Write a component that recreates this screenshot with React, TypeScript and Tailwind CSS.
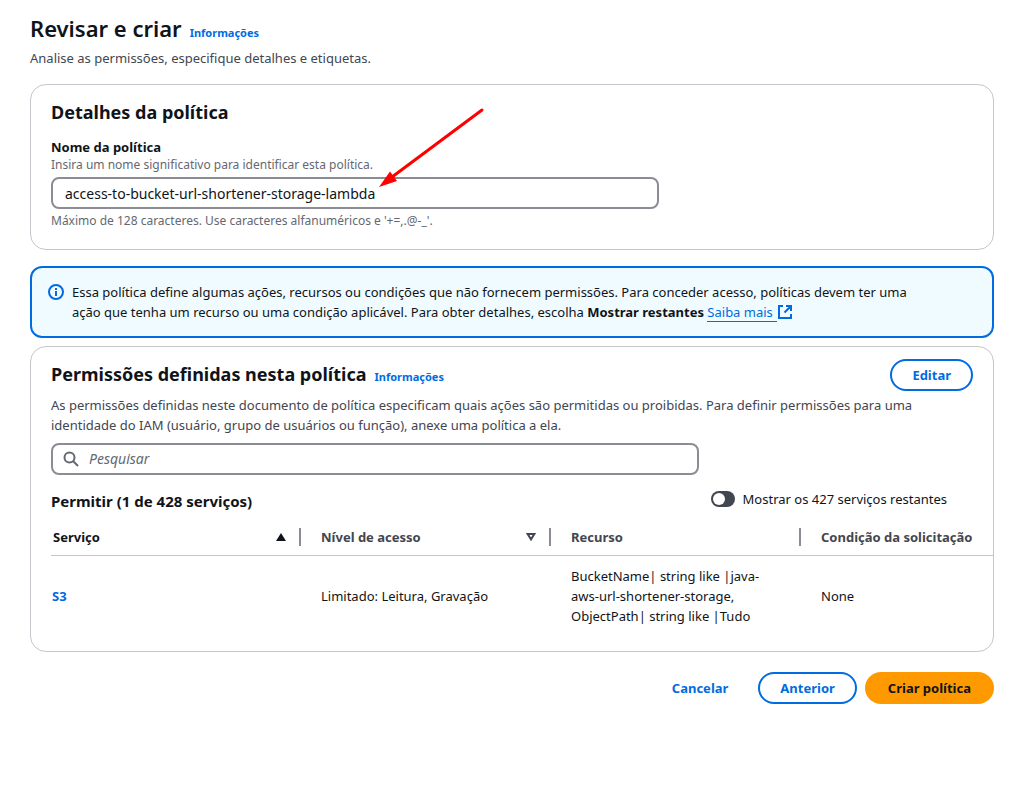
import { useState } from "react";

const serviceRows = [
  {
    service: "S3",
    access: "Limitado: Leitura, Gravação",
    resource: ["BucketName| string like |java-", "aws-url-shortener-storage,", "ObjectPath| string like |Tudo"],
    condition: "None",
  },
];

function InfoLink() {
  return (
    <a href="#info" className="text-[11px] font-bold text-[#006ce0]">
      Informações
    </a>
  );
}

function InfoIcon() {
  return (
    <svg viewBox="0 0 16 16" className="mt-0.5 size-4 shrink-0" fill="none" stroke="#006ce0" strokeWidth="2" aria-hidden="true">
      <circle cx="8" cy="8" r="7" />
      <path d="M8 12V7M8 6V4" />
    </svg>
  );
}

function ExternalIcon() {
  return (
    <svg viewBox="0 0 16 16" className="inline-block size-4 align-[-3px]" fill="none" stroke="#006ce0" strokeWidth="2" aria-hidden="true">
      <path d="M9 2h5v5M7.500 8.500 13.500 2.500M14 10v4H2V2h4" />
    </svg>
  );
}

function SearchIcon() {
  return (
    <svg viewBox="0 0 16 16" className="size-4 shrink-0" fill="none" stroke="#656871" strokeWidth="2" aria-hidden="true">
      <circle cx="6.500" cy="6.500" r="5" />
      <path d="m15 15-5-5" />
    </svg>
  );
}

function Arrow() {
  return (
    <svg viewBox="0 0 108 82" className="pointer-events-none absolute top-[22px] left-[347px] h-[82px] w-[108px]" aria-hidden="true">
      <path d="M104 3 14 70" stroke="#ff0000" strokeWidth="3" strokeLinecap="round" />
      <path d="M1 80 12 64.500 19 74Z" fill="#ff0000" />
    </svg>
  );
}

const heading = "text-lg leading-6 font-bold";
const field = "h-8 w-full rounded-lg border-2 border-[#8c8c94] bg-white text-sm";
const card = "rounded-2xl border border-[#c6c6cd] bg-white";
const outlineButton = "h-8 rounded-full border-2 border-[#006ce0] px-5 font-bold text-[#006ce0]";
const divider = "h-[18px] w-0.5 bg-[#8c8c94]";

export default function App() {
  const [name, setName] = useState("access-to-bucket-url-shortener-storage-lambda");
  const [showRest, setShowRest] = useState(false);

  return (
    <main className="pt-3 pr-4 pb-8 pl-[30px] font-['Noto_Sans',sans-serif] text-[13px] leading-5 text-[#0f141a]">
      <header>
        <div className="flex items-baseline gap-2">
          <h1 className="text-[22px] leading-8 font-semibold">Revisar e criar</h1>
          <InfoLink />
        </div>
        <p className="mt-1 text-[#424650]">Analise as permissões, especifique detalhes e etiquetas.</p>
      </header>

      <section className={`${card} relative mt-4 px-5 pt-[15px] pb-5`}>
        <h2 className={heading}>Detalhes da política</h2>
        <label htmlFor="policy-name" className="mt-[13px] block font-bold">
          Nome da política
        </label>
        <p className="text-xs leading-4 text-[#656871]">Insira um nome significativo para identificar esta política.</p>
        <input
          id="policy-name"
          value={name}
          onChange={(e) => setName(e.target.value)}
          className={`${field} mt-1 block max-w-[608px] px-3`}
        />
        <p className="mt-1 text-xs leading-4 text-[#656871]">
          Máximo de 128 caracteres. Use caracteres alfanuméricos e '+=,.@-_'.
        </p>
        <Arrow />
      </section>

      <div className="mt-4 flex gap-2 rounded-xl border-2 border-[#006ce0] bg-[#f0fbff] px-4 py-3.5">
        <InfoIcon />
        <p className="pr-14">
          Essa política define algumas ações, recursos ou condições que não fornecem permissões. Para conceder acesso, políticas devem ter uma ação que tenha um recurso ou uma condição aplicável. Para obter detalhes, escolha <b>Mostrar restantes</b>{" "}
          <a href="#more" className="text-[#006ce0]">
            <span className="border-b border-[#006ce0] pr-1">Saiba mais</span>
            <ExternalIcon />
          </a>
        </p>
      </div>

      <section className={`${card} mt-2 pt-3 pb-[15px] pl-5`}>
        <div className="flex items-start justify-between pr-5">
          <div className="flex items-baseline gap-2 pt-[3px]">
            <h2 className={heading}>Permissões definidas nesta política</h2>
            <InfoLink />
          </div>
          <button type="button" className={outlineButton}>
            Editar
          </button>
        </div>
        <p className="mt-1 pr-5 text-[#424650]">
          As permissões definidas neste documento de política especificam quais ações são permitidas ou proibidas. Para definir permissões para uma identidade do IAM (usuário, grupo de usuários ou função), anexe uma política a ela.
        </p>
        <label className={`${field} mt-2 flex max-w-[648px] items-center gap-2.5 px-2.5`}>
          <SearchIcon />
          <input type="search" aria-label="Pesquisar" placeholder="Pesquisar" className="min-w-0 flex-1 outline-none placeholder:text-[#656871] placeholder:italic" />
        </label>
        <div className="mt-3.5 flex items-start justify-between pr-[46px]">
          <h3 className="pt-0.5 text-[15px] leading-5 font-bold">Permitir (1 de 428 serviços)</h3>
          <label className="flex items-center gap-2">
            <input
              type="checkbox"
              role="switch"
              checked={showRest}
              onChange={(e) => setShowRest(e.target.checked)}
              className="h-4 w-6 appearance-none rounded-full bg-[#424650] p-0.5 before:block before:size-3 before:rounded-full before:bg-white checked:bg-[#006ce0] checked:before:translate-x-2"
            />
            Mostrar os 427 serviços restantes
          </label>
        </div>
        <table className="mt-2 w-full table-fixed text-left">
          <colgroup>
            <col className="w-[250px]" />
            <col className="w-[250px]" />
            <col className="w-[250px]" />
            <col />
          </colgroup>
          <thead>
            <tr className="h-9 border-b border-[#c6c6cd] text-[#424650]">
              <th className="p-0 pl-0.5 text-[#0f141a]">
                <div className="flex items-center">
                  <span className="flex-1">Serviço</span>
                  <svg viewBox="0 0 10 8" className="mr-[13px] h-2 w-2.5" aria-hidden="true">
                    <path d="M5 0 10 8H0Z" fill="#0f141a" />
                  </svg>
                  <i className={divider} />
                </div>
              </th>
              <th className="p-0 pl-5">
                <div className="flex items-center">
                  <span className="flex-1">Nível de acesso</span>
                  <svg viewBox="0 0 10 8" className="mr-[13px] h-2 w-2.5" aria-hidden="true">
                    <path d="M1.600 1h6.800L5 6.400Z" fill="none" stroke="#424650" strokeWidth="2" />
                  </svg>
                  <i className={divider} />
                </div>
              </th>
              <th className="p-0 pl-5">
                <div className="flex items-center">
                  <span className="flex-1">Recurso</span>
                  <i className={divider} />
                </div>
              </th>
              <th className="p-0 pl-5 whitespace-nowrap">Condição da solicitação</th>
            </tr>
          </thead>
          <tbody>
            {serviceRows.map((row) => (
              <tr key={row.service}>
                <td className="py-2.5 pl-px">
                  <a href="#s3" className="font-bold text-[#006ce0]">
                    {row.service}
                  </a>
                </td>
                <td className="pl-5">{row.access}</td>
                <td className="py-2.5 pl-5">
                  {row.resource.map((line) => (
                    <div key={line} className="whitespace-nowrap">
                      {line}
                    </div>
                  ))}
                </td>
                <td className="pl-5">{row.condition}</td>
              </tr>
            ))}
          </tbody>
        </table>
      </section>

      <footer className="mt-5 flex justify-end gap-2">
        <button type="button" className="h-8 px-[22px] font-bold text-[#006ce0]">
          Cancelar
        </button>
        <button type="button" className={outlineButton}>
          Anterior
        </button>
        <button type="button" className="h-8 rounded-full bg-[#ff9900] px-[23px] font-bold">
          Criar política
        </button>
      </footer>
    </main>
  );
}
